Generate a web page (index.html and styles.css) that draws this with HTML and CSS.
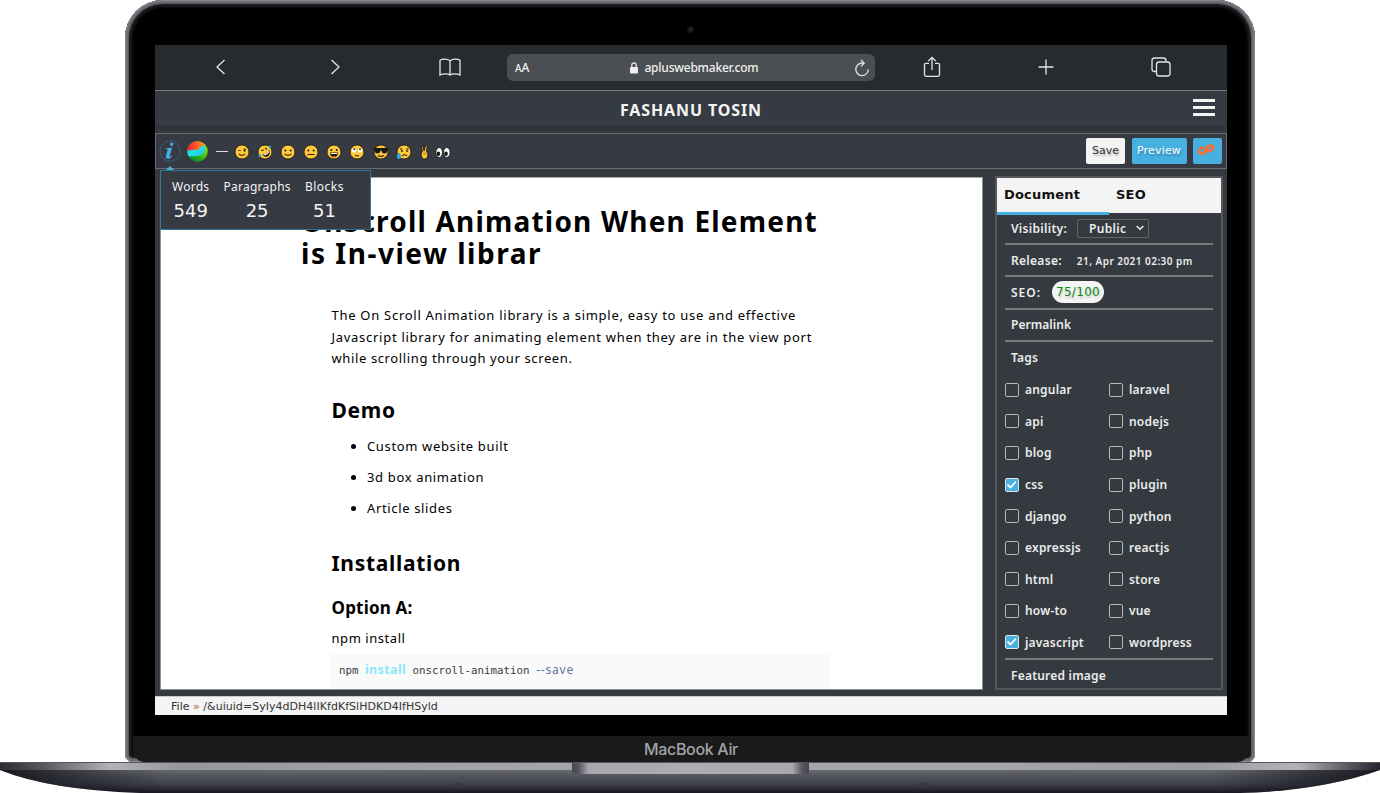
FILE: index.html
```html
<!DOCTYPE html>
<html lang="en">
<head>
<meta charset="utf-8">
<title>Fashanu Tosin</title>
<link rel="stylesheet" href="styles.css">
</head>
<body>
<div class="laptop">
  <div class="lid">
    <i class="camera"></i>
    <div class="screen">
      <nav class="browser">
        <span class="cell"><svg width="24" height="24" viewBox="0 0 24 24"><path d="M15.500 5L8 12l7.500 7"/></svg></span>
        <span class="cell"><svg width="24" height="24" viewBox="0 0 24 24"><path d="M8.500 5l7.500 7-7.500 7"/></svg></span>
        <span class="cell"><svg width="24" height="24" viewBox="0 0 24 24"><path d="M12 6v14M12 6C10.500 3.600 4.500 3.600 2 5.200V20c2.500-1.600 8.500-1.600 10 0 1.500-1.600 7.500-1.600 10 0V5.200C19.500 3.600 13.500 3.600 12 6z"/></svg></span>
        <div class="address">
          <span class="aa"><small>A</small>A</span>
          <span class="url"><svg class="lock" width="8" height="12" viewBox="0 0 8 12"><rect x="0" y="5" width="8" height="6.500" rx="1"/><path d="M1.800 5.500V3.200a2.200 2.300 0 0 1 4.400 0v2.300"/></svg><b>apluswebmaker.com</b></span>
          <svg class="reload" width="16" height="18" viewBox="0 0 16 18"><path d="M8 4.200A6.200 6.200 0 1 0 14.200 10.500M5.500 4.200h4M7 1l3.200 3.200L7 7.400"/></svg>
        </div>
        <span class="cell"><svg width="24" height="24" viewBox="0 0 24 24"><path d="M9 8.300H6q-1.500 0-1.500 1.500v10q0 1.500 1.500 1.500h12q1.500 0 1.500-1.500v-10q0-1.500-1.500-1.500h-3M12 15V2.500M8.300 6L12 2.300 15.700 6"/></svg></span>
        <span class="cell"><svg width="24" height="24" viewBox="0 0 24 24"><path d="M12 4.500v15M4.500 12h15"/></svg></span>
        <span class="cell"><svg width="24" height="24" viewBox="0 0 24 24"><rect x="7.500" y="7" width="13.500" height="14" rx="2.500"/><path d="M7 16.500H5.500Q3 16.500 3 14V5.500Q3 3 5.500 3h9Q17 3 17 5.500V7"/></svg></span>
      </nav>
      <header class="masthead">
        <b class="brand">FASHANU TOSIN</b>
        <span class="burger"><i></i><i></i><i></i></span>
      </header>
      <div class="toolbar">
        <svg class="info" width="22" height="22" viewBox="0 0 22 22"><circle cx="11" cy="11" r="10"/><path d="M12.800 2.600a1.700 1.700 0 1 1-.1 3.400 1.700 1.700 0 0 1 .1-3.400zM7 8.200l6.200-.6-2.500 8.400c-.3 1.100.4 1.300 2.300-.6l.5.600c-1.600 2-2.900 2.800-4.600 2.800-2 0-2.500-1-2-2.800l1.700-6c.2-.8-.3-.9-1.700-.9z"/></svg>
        <svg class="ball" width="21" height="21" viewBox="0 0 21 21">
          <defs>
            <linearGradient id="red" x2="1"><stop stop-color="#ff1838"/><stop offset="1" stop-color="#ff9a20"/></linearGradient>
            <linearGradient id="cyan" x2="1" y2="1"><stop stop-color="#00d9c0"/><stop offset=".5" stop-color="#20e2e8"/><stop offset="1" stop-color="#22c0d8"/></linearGradient>
            <linearGradient id="green" x1="1" x2=".3" y2="1"><stop stop-color="#e8e800"/><stop offset=".5" stop-color="#58cc00"/><stop offset="1" stop-color="#00863a"/></linearGradient>
            <clipPath id="disc"><circle cx="10.500" cy="10.500" r="10.200"/></clipPath>
          </defs>
          <g clip-path="url(#disc)"><path fill="url(#green)" d="M0 0h21v21H0z"/><path fill="url(#cyan)" d="M0 8Q8 5 17 3q3 8-2 11Q9 16 0 15z"/><path fill="url(#red)" d="M0 0h14l4 3.500Q14 5 11 9 6 8 0 10z"/></g>
        </svg>
        <i class="dash"></i>
        <span class="emojis">
          <svg viewBox="0 0 16 16"><circle class="f" cx="8" cy="8" r="7"/><path class="l" d="M4.500 6.500h2.200M9.500 5.500q1.200-1 2.300 0M4.800 9.800q3 3 6.400 0"/><circle cx="10.600" cy="6.800" r="1"/></svg>
          <svg viewBox="0 0 16 16"><circle class="f" cx="8" cy="8" r="7"/><path class="l" d="M4 6.500l3-.5M8 4l2 1.500"/><path d="M5.500 10.500q5 0 6.500-5 2 5-1.500 7-3 1.200-5-2z"/><path fill="#fff" d="M6.500 10.500q4-.5 5.300-4l.5 1.200q-1.500 3.200-5 3.600z"/><path class="tear" d="M1.500 11l2.300-1 .2 2.300q-1 1.700-2.200.6zM11 2.500l2-1q1.700.4 1 2l-1.800.8z"/></svg>
          <svg viewBox="0 0 16 16"><circle class="f" cx="8" cy="8" r="7"/><circle cx="5.300" cy="6.500" r="1"/><circle cx="10.700" cy="6.500" r="1"/><path class="l" d="M4.500 9.800q3.500 3.200 7 0"/></svg>
          <svg viewBox="0 0 16 16"><circle class="f" cx="8" cy="8" r="7"/><circle cx="5.300" cy="6.500" r="1"/><circle cx="10.700" cy="6.500" r="1"/><path class="l" d="M4.500 10.500h7"/></svg>
          <svg viewBox="0 0 16 16"><circle class="f" cx="8" cy="8" r="7"/><circle cx="5.300" cy="6" r="1"/><circle cx="10.700" cy="6" r="1"/><path d="M4 8.500h8q-.3 4.700-4 4.700t-4-4.700z"/><path fill="#fff" d="M4.800 9h6.400v1H4.800z"/><path fill="#e8483c" d="M6.200 12.500q1.800-1.600 3.600 0-1.800 1-3.600 0z"/></svg>
          <svg viewBox="0 0 16 16"><circle class="f" cx="8" cy="8" r="7"/><circle fill="#fff" cx="5" cy="6.400" r="2.200"/><circle fill="#fff" cx="11" cy="6.400" r="2.200"/><circle cx="5.300" cy="5.200" r=".9"/><circle cx="11" cy="5.200" r=".9"/><path class="l" d="M6 11.700h4"/></svg>
          <svg viewBox="0 0 16 16"><circle class="f" cx="8" cy="8" r="7"/><path d="M.5 4h15v2h-1q-.3 3.500-3 3.500T8.500 6.500h-1q-.3 3-3 3T1.500 6h-1z"/><path class="l" d="M5 11.500q3 1.800 6 0"/></svg>
          <svg viewBox="0 0 16 16"><circle class="f" cx="8" cy="8" r="7"/><circle cx="6" cy="7" r=".9"/><circle cx="11" cy="7" r=".9"/><path class="l" d="M4.200 5.500l2-1M10.500 4.500l2 1M6 11.800q2.500-2 5 0"/><path class="tear" d="M3.300 8.500q2.300 3 2 4.600-.6 1.900-2.400 1.900T.6 13q0-1.500 2.700-4.500z"/></svg>
          <svg class="hand" viewBox="0 0 10 16"><path class="f" d="M1.500 2l1.300-.6L4.600 7l1.700-6 1.500.3-.8 6.500 1.500 1.400-.5 3.300-1.500 2.500H3.700L2 12.500 1.600 9 3 7.500z"/><path class="l thin" d="M3 9l3 .5-1.500 2M6.500 8v2"/></svg>
          <svg viewBox="0 0 16 16"><ellipse class="eye" cx="4.200" cy="8.500" rx="3.300" ry="5"/><ellipse class="eye" cx="11.800" cy="8.500" rx="3.300" ry="5"/><ellipse cx="3.400" cy="9.700" rx="1.800" ry="2.300"/><ellipse cx="11" cy="9.700" rx="1.800" ry="2.300"/></svg>
        </span>
        <span class="actions">
          <button class="btn save">Save</button>
          <button class="btn preview">Preview</button>
          <button class="btn link"><svg width="18" height="14" viewBox="0 0 18 14"><path d="M8 4.800Q4.500 4 3 6.200t-.5 3.600Q5 11.500 7.600 9.800L8.400 6M9 9.200l1.500-5.400q2.500-1.800 4.800-.9T14.800 7Q12 8.800 10 8"/></svg></button>
        </span>
        <section class="stats">
          <dl><dt>Words</dt><dd>549</dd></dl>
          <dl><dt>Paragraphs</dt><dd>25</dd></dl>
          <dl><dt class="wide">Blocks</dt><dd>51</dd></dl>
        </section>
      </div>
      <div class="workspace">
        <main class="editor">
          <article>
            <h1>OnScroll Animation When Element<br><span class="second">is In-view librar</span></h1>
            <p class="intro">The On Scroll Animation library is a simple, easy to use and effective<br>Javascript library for animating element when they are in the view port<br><span class="last">while scrolling through your screen.</span></p>
            <h2>Demo</h2>
            <ul>
              <li>Custom website built</li>
              <li>3d box animation</li>
              <li>Article slides</li>
            </ul>
            <h2 class="install">Installation</h2>
            <h3>Option A:</h3>
            <p class="npm">npm install</p>
            <pre><code>npm <b>install</b> onscroll-animation <i>--save</i></code></pre>
          </article>
        </main>
        <aside class="panel">
          <div class="tabs"><b class="on">Document</b><b>SEO</b></div>
          <div class="rows">
            <div class="row">Visibility:<span class="select">Public<svg width="8" height="6" viewBox="0 0 8 6"><path d="M.7 1L4 4.300 7.300 1"/></svg></span></div>
            <div class="row">Release:<span class="date">21, Apr 2021 02:30 pm</span></div>
            <div class="row"><span class="seo">SEO:</span><span class="score">75/100</span></div>
            <div class="row">Permalink</div>
            <div class="row tagline">Tags</div>
            <div class="tags">
              <label><i class="box"></i>angular</label><label><i class="box"></i>laravel</label>
              <label><i class="box"></i>api</label><label><i class="box"></i>nodejs</label>
              <label><i class="box"></i>blog</label><label><i class="box"></i>php</label>
              <label><i class="box on"><svg width="13" height="13" viewBox="0 0 13 13"><path d="M2.500 6.500l3 3 5.500-6"/></svg></i>css</label><label><i class="box"></i>plugin</label>
              <label><i class="box"></i>django</label><label><i class="box"></i>python</label>
              <label><i class="box"></i>expressjs</label><label><i class="box"></i>reactjs</label>
              <label><i class="box"></i>html</label><label><i class="box"></i>store</label>
              <label><i class="box"></i>how-to</label><label><i class="box"></i>vue</label>
              <label><i class="box on"><svg width="13" height="13" viewBox="0 0 13 13"><path d="M2.500 6.500l3 3 5.500-6"/></svg></i>javascript</label><label><i class="box"></i>wordpress</label>
            </div>
            <div class="row featured">Featured image</div>
          </div>
        </aside>
      </div>
      <footer class="status">File <em>»</em> /&amp;uiuid=SyIy4dDH4lIKfdKfSlHDKD4IfHSyld</footer>
    </div>
    <div class="chin">MacBook Air</div>
  </div>
  <svg class="base" width="1380" height="31" viewBox="0 0 1380 31">
    <defs>
      <linearGradient id="deck" x2="1"><stop stop-color="#2b2c31"/><stop offset=".03" stop-color="#55565b"/><stop offset=".08" stop-color="#b2b3b8"/><stop offset=".13" stop-color="#96979d"/><stop offset=".3" stop-color="#a2a3a9"/><stop offset=".7" stop-color="#a6a7ac"/><stop offset=".87" stop-color="#9a9ba1"/><stop offset=".94" stop-color="#b2b3b8"/><stop offset=".98" stop-color="#515259"/><stop offset="1" stop-color="#23242c"/></linearGradient>
      <linearGradient id="under" x2="0" y2="1"><stop stop-color="#696a70"/><stop offset=".25" stop-color="#53555e"/><stop offset=".6" stop-color="#40424c"/><stop offset="1" stop-color="#191624"/></linearGradient>
      <linearGradient id="side" x2="1"><stop stop-color="#101118" stop-opacity=".9"/><stop offset=".12" stop-color="#101118" stop-opacity="0"/><stop offset=".88" stop-color="#101118" stop-opacity="0"/><stop offset="1" stop-color="#101118" stop-opacity=".9"/></linearGradient>
      <linearGradient id="notch" x2="1"><stop stop-color="#42434b"/><stop offset=".03" stop-color="#585962"/><stop offset=".07" stop-color="#a7a8ae"/><stop offset=".5" stop-color="#acadb2"/><stop offset=".93" stop-color="#a7a8ae"/><stop offset=".97" stop-color="#585962"/><stop offset="1" stop-color="#42434b"/></linearGradient>
    </defs>
    <path fill="url(#under)" d="M0 8h1380Q1320 29 1240 31H140Q50 28 0 8z"/>
    <path fill="url(#side)" d="M0 8h1380Q1320 29 1240 31H140Q50 28 0 8z"/>
    <path fill="url(#deck)" d="M0 .500h1380V8H0z"/>
    <path fill="#55565b" d="M0 0h1380v1H0z"/>
    <path fill="url(#notch)" d="M572 1h237v11H578q-6 0-6-4z"/>
    <path fill="none" stroke="#30313a" d="M452 22.500q6-2 12 .5M917 22.500q6-2 12 .5"/>
  </svg>
</div>
</body>
</html>
```
FILE: styles.css
```css
* { box-sizing: border-box; }
body { margin: 0; background: #fff; font-family: "Noto Sans", sans-serif; font-size: 12px; overflow: hidden; }
h1, h2, h3, p, ul, dl, dd, pre { margin: 0; padding: 0; }

/* Laptop shell */
.laptop { width: 1380px; height: 793px; display: flex; flex-direction: column; align-items: center; }
.lid { position: relative; width: 1130px; height: 762px; flex: none; padding: 45px 28px 0 30px; background: #000; border-radius: 38px 38px 8px 8px; box-shadow: inset 0 0 0 1px #8a8b91, inset 0 0 0 3px #6b6c73, inset 0 0 0 4px #55575b, inset 0 0 3px 7px #1c1e20; }
.camera { position: absolute; left: 562px; top: 26px; width: 7px; height: 7px; border-radius: 50%; background: #2a2a30; border: 2px solid #141416; }
.chin { width: 1116px; height: 26px; margin: 21px 0 0 -22px; background: #1a1a1a; border-radius: 0 0 12px 12px; color: #a2a2a8; font: 500 16px/27px Inter, sans-serif; letter-spacing: -.33px; text-align: center; }
.base { flex: none; display: block; }
.screen { width: 1072px; height: 670px; background: #343a40; display: flex; flex-direction: column; }

/* Browser bar */
.browser { height: 46px; flex: none; padding: 0 9px 1px; background: #262b2e; border-bottom: 1px solid #77797c; display: flex; align-items: center; }
.cell { flex: 1; display: flex; justify-content: center; }
.cell svg, .reload { fill: none; stroke: #e4e5e6; stroke-width: 1.3; }
.address { width: 368px; height: 27px; margin-top: 1px; border-radius: 6px; background: #4b4e52; color: #f0f0f0; display: flex; align-items: center; justify-content: space-between; padding: 0 5px 0 8px; }
.aa { width: 17px; font-size: 12px; font-weight: 500; line-height: 16px; }
.aa small { font-size: 10px; }
.url { display: flex; align-items: center; gap: 6px; line-height: 16px; margin-left: 3px; }
.url b { font-weight: 500; letter-spacing: -.22px; }
.lock { fill: #f0f0f0; }
.lock path { fill: none; stroke: #f0f0f0; stroke-width: 1.2; }

/* Masthead and toolbar */
.masthead { height: 35px; flex: none; background: #363a43; display: grid; grid-template-columns: 1fr auto 1fr; align-items: center; padding: 2px 12px 0 0; box-shadow: 0 2px 5px #2a2f33; clip-path: inset(0 0 -8px 0); }
.brand { grid-column: 2; color: #f4f4f4; font-size: 16px; line-height: 20px; letter-spacing: .88px; padding-left: 12px; }
.burger { justify-self: end; display: flex; flex-direction: column; gap: 4px; margin-top: -4px; }
.burger i { width: 22px; height: 3px; background: #f4f4f4; }
.toolbar { position: relative; height: 36px; flex: none; margin-top: 7px; background: #363a43; border: 1px solid #6b6e70; display: flex; align-items: center; padding: 0 4px; }
.info circle { fill: none; stroke: #35708d; stroke-dasharray: 2.500 .8; }
.info path { fill: #45aee0; }
.info { margin-left: -1px; }
.ball { margin-left: 6px; }
.dash { width: 12px; height: 1px; background: #ddd; margin-left: 8px; }
.emojis { display: flex; align-items: center; gap: 7.100px; margin-left: 6px; padding-top: 1px; }
.emojis svg { width: 16px; height: 16px; fill: #181818; }
.emojis .hand { width: 11px; margin: 0 -2px 0 0; }
.emojis .f { fill: #ffc83d; stroke: #15130e; stroke-width: .8; }
.emojis .l { fill: none; stroke: #382600; stroke-width: 1.1; }
.emojis .thin { stroke: #a06a10; stroke-width: .7; }
.emojis .tear { fill: #2aa9e8; }
.emojis .eye { fill: #fff; stroke: #111; stroke-width: .8; }
.actions { margin-left: auto; display: flex; gap: 6.500px; }
.btn { height: 26px; border: 0; border-radius: 2px; padding: 0; text-align: center; font-family: "DejaVu Sans", sans-serif; font-size: 11px; line-height: 26px; color: #fff; background: #46b1e1; text-shadow: 1px 2px 2px #0004; }
.save { width: 39px; background: #f4f4f4; color: #333; }
.preview { width: 55px; letter-spacing: .17px; }
.link { width: 29px; }
.link svg { display: block; margin: -3px 0 0 4px; fill: none; stroke: #f96e35; stroke-width: 2.700; }

/* Word count popover */
.stats { position: absolute; z-index: 2; left: 4px; top: 36px; width: 211px; height: 60px; background: #363a43; border: 1px solid #347795; color: #f4f4f4; display: flex; gap: 14px; padding: 7px 11px; }
.stats::before { content: ""; position: absolute; left: 5px; top: -5px; border: 4px solid transparent; border-top: 0; border-bottom-color: #46b1e1; }
.stats dl { text-align: center; }
.stats dt { line-height: 18px; letter-spacing: .27px; }
.stats .wide { letter-spacing: .5px; }
.stats dd { font: 18px/30px "DejaVu Sans", sans-serif; }

/* Editor */
.workspace { height: 527px; flex: none; display: flex; padding: 7px 4px 6px 5px; gap: 12px; }
.editor { width: 823px; flex: none; height: 513px; margin-top: 1px; overflow: hidden; background: #fff; border: 1px solid #8a8e92; border-top-color: #a6a9ac; padding: 27px 0 0 140px; color: #000; }
h1 { font-size: 28px; line-height: 32px; letter-spacing: 1.200px; white-space: nowrap; }
.second { letter-spacing: 1.520px; }
.intro, ul, h2, h3, .npm { margin-left: 30.500px; }
.intro { margin-top: 36px; font-size: 13px; line-height: 21.500px; letter-spacing: .720px; white-space: nowrap; }
.last { letter-spacing: .620px; }
h2 { font-size: 21px; line-height: 28px; letter-spacing: .700px; margin-top: 26px; }
ul { font-size: 13px; line-height: 31px; letter-spacing: .650px; padding-left: 35.500px; margin-top: 7px; }
.install { margin-top: 25px; }
h3 { font-size: 17px; line-height: 24px; letter-spacing: .190px; margin-top: 19px; }
.npm { font-size: 13px; line-height: 20px; letter-spacing: .560px; margin-top: 8px; }
pre { width: 500px; height: 50px; background: #fafafa; margin: 6px 0 0 30px; padding: 7px 8px; font: 10.800px/18px "DejaVu Sans Mono", monospace; color: #383a42; }
code { font: inherit; }
pre b { font: bold 12.500px/18px "Noto Sans", sans-serif; letter-spacing: .37px; color: #8be9fd; }
pre i { font: 12px/18px "Noto Sans", sans-serif; letter-spacing: .8px; color: #6272a4; }

/* Document panel */
.panel { flex: 1; height: 514px; border: 2px solid #55585b; }
.tabs { height: 35px; background: #f4f4f4; display: grid; grid-template-columns: 1fr 1fr; font-family: "DejaVu Sans", sans-serif; font-size: 13px; line-height: 34px; letter-spacing: .2px; color: #111; }
.tabs b { padding-left: 7px; }
.tabs .on { border-bottom: 3px solid #46b1e1; }
.rows { padding: 0 8px; color: #ececec; font-weight: 600; letter-spacing: .2px; }
.row { height: 32.200px; border-bottom: 2px solid #777a7d; padding-left: 6px; display: flex; align-items: center; letter-spacing: .3px; }
.row:nth-child(4) { letter-spacing: .04px; }
.tagline { border: 0; letter-spacing: .17px; }
.select { width: 72px; height: 19px; border: 1px solid #62656a; border-radius: 2px; margin-left: 10px; padding: 0 4px 0 11px; display: flex; align-items: center; justify-content: space-between; }
.select svg { fill: none; stroke: #eee; stroke-width: 1.500; }
.date { font-size: 10px; letter-spacing: .460px; margin-left: 15px; padding-top: 1px; }
.seo { letter-spacing: .980px; }
.score { margin-left: 11px; height: 22px; border-radius: 11px; background: #f4f4f4; padding: 0 4px; font: 12px/22px "DejaVu Sans", sans-serif; color: #0a8a0a; text-shadow: 1px 2px 2px #0003; }
.tags { display: grid; grid-template-columns: 104px 1fr; grid-auto-rows: 31.600px; }
.tags label { display: flex; align-items: center; gap: 6px; }
.box { width: 14px; height: 14px; border: 1px solid #b5b6b8; border-radius: 2px; display: flex; }
.box.on { background: #46b1e1; border-color: #e4e4e4; }
.box svg { margin: -1px; flex: none; fill: none; stroke: #fff; stroke-width: 1.800; }
.featured { border-bottom: 0; border-top: 2px solid #777a7d; letter-spacing: .21px; }
.status { height: 19px; background: #f4f4f4; border-top: 1px solid #c9cacb; padding-left: 16px; color: #333; font: 11px/19px "DejaVu Sans", sans-serif; letter-spacing: .03px; }
.status em { font-style: normal; color: #a05a30; }
```
